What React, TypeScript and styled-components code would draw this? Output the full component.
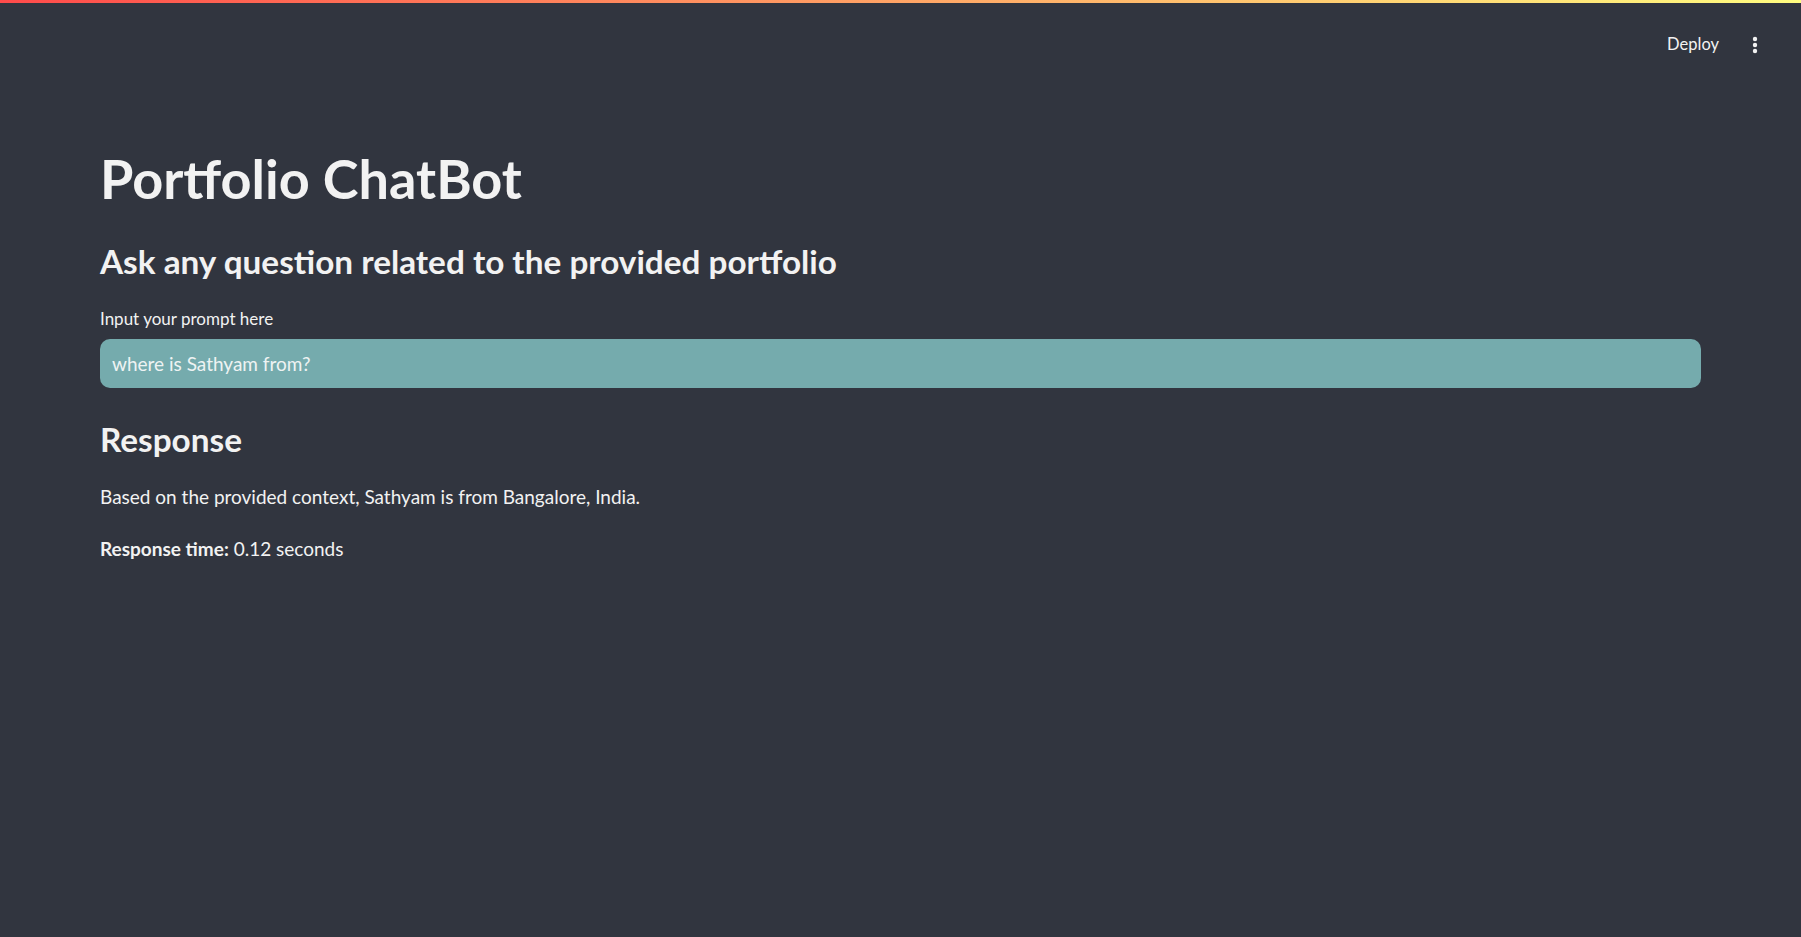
import styled, { createGlobalStyle } from "styled-components";

const GlobalStyle = createGlobalStyle`
  html, body {
    margin: 0;
    padding: 0;
    background-color: #31353f;
  }
  body {
    font-family: "Source Sans Pro", Lato, "Noto Sans", sans-serif;
    color: #f2f2f2;
  }
  #root {
    min-height: 100vh;
  }
`;

const Page = styled.div`
  min-height: 937px;
  display: flex;
  flex-direction: column;
  background-color: #31353f;
`;

const Decoration = styled.div`
  height: 3px;
  background-image: linear-gradient(90deg, rgb(255, 75, 75), rgb(255, 253, 128));
`;

const Toolbar = styled.header`
  height: 84px;
  display: flex;
  align-items: center;
  justify-content: flex-end;
  gap: 30px;
  padding-right: 40px;
`;

const DeployButton = styled.button`
  background: none;
  border: none;
  padding: 0;
  font-family: inherit;
  font-size: 16.5px;
  line-height: 1.2;
  color: #f2f2f2;
  cursor: pointer;
`;

const MenuButton = styled.button`
  background: none;
  border: none;
  padding: 0;
  width: 12px;
  height: 20px;
  display: flex;
  align-items: center;
  justify-content: center;
  cursor: pointer;
`;

const Main = styled.main`
  display: flex;
  flex-direction: column;
  padding: 59.5px 100px 0;
`;

const Title = styled.h1`
  margin: 0;
  font-size: 54px;
  font-weight: 700;
  line-height: 1.2;
  color: #f2f2f2;
`;

const Subheader = styled.h3<{ $gap: number }>`
  margin: ${(p) => p.$gap}px 0 0;
  font-size: 33.3px;
  font-weight: 700;
  line-height: 1.2;
  color: #f2f2f2;
`;

const Label = styled.label`
  margin-top: 27px;
  font-size: 17px;
  line-height: 1.2;
  color: #f2f2f2;
`;

const PromptInput = styled.input`
  margin-top: 10px;
  box-sizing: border-box;
  height: 49px;
  width: 100%;
  padding: 0 12px;
  border: none;
  border-radius: 10px;
  background-color: #75abad;
  color: #eef3f3;
  font-family: inherit;
  font-size: 19px;
  outline: none;
`;

const Paragraph = styled.p<{ $gap: number }>`
  margin: ${(p) => p.$gap}px 0 0;
  font-size: 19px;
  line-height: 1.6;
  color: #f2f2f2;

  strong {
    font-weight: 700;
  }
`;

export default function App() {
  return (
    <Page>
      <GlobalStyle />
      <Decoration />
      <Toolbar>
        <DeployButton>Deploy</DeployButton>
        <MenuButton aria-label="Main menu">
          <svg width="6" height="18" viewBox="0 0 6 18" fill="#f2f2f2">
            <circle cx="3" cy="3" r="2.2" />
            <circle cx="3" cy="9" r="2.2" />
            <circle cx="3" cy="15" r="2.2" />
          </svg>
        </MenuButton>
      </Toolbar>
      <Main>
        <Title>Portfolio ChatBot</Title>
        <Subheader $gap={30.5}>Ask any question related to the provided portfolio</Subheader>
        <Label htmlFor="prompt">Input your prompt here</Label>
        <PromptInput id="prompt" defaultValue="where is Sathyam from?" />
        <Subheader $gap={32}>Response</Subheader>
        <Paragraph $gap={22}>Based on the provided context, Sathyam is from Bangalore, India.</Paragraph>
        <Paragraph $gap={22}>
          <strong>Response time:</strong> 0.12 seconds
        </Paragraph>
      </Main>
    </Page>
  );
}
